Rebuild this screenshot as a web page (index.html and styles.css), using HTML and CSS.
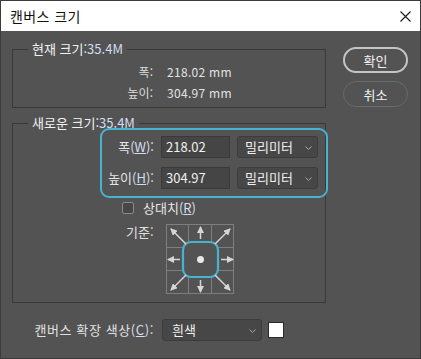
FILE: index.html
```html
<!DOCTYPE html>
<html lang="ko">
<head>
<meta charset="utf-8">
<title>캔버스 크기</title>
<link rel="stylesheet" href="styles.css">
</head>
<body>
<div class="window">
  <div class="titlebar">
    <span class="title">캔버스 크기</span>
    <svg class="close" width="11" height="11" viewBox="0 0 11 11"><path d="M0.5 0.5 L10.5 10.5 M10.5 0.5 L0.5 10.5" stroke="#1a1a1a" stroke-width="1.1" fill="none"/></svg>
  </div>
  <div class="content">
    <div class="main">
      <fieldset class="group current">
        <legend>현재 크기:<span class="lat">35.4M</span></legend>
        <div class="info">
          <span class="lbl">폭:</span><span class="val">218.02 mm</span>
          <span class="lbl">높이:</span><span class="val">304.97 mm</span>
        </div>
      </fieldset>
      <fieldset class="group new">
        <legend>새로운 크기:<span class="lat">35.4M</span></legend>
        <div class="dims">
          <span class="dlbl">폭<span class="lat">(<u>W</u>)</span>:</span>
          <div class="field">218.02</div>
          <div class="select"><span>밀리미터</span><svg class="chev" width="7" height="4" viewBox="0 0 7 4"><path d="M0.5 0.5 L3.5 3.5 L6.5 0.5" stroke="#a8a8a8" fill="none"/></svg></div>
          <span class="dlbl">높이<span class="lat">(<u>H</u>)</span>:</span>
          <div class="field">304.97</div>
          <div class="select"><span>밀리미터</span><svg class="chev" width="7" height="4" viewBox="0 0 7 4"><path d="M0.5 0.5 L3.5 3.5 L6.5 0.5" stroke="#a8a8a8" fill="none"/></svg></div>
        </div>
        <div class="rel"><span class="checkbox"></span><span>상대치<span class="lat">(<u>R</u>)</span></span></div>
        <div class="anchor">
          <span class="alabel">기준:</span>
          <svg class="grid" width="69" height="71" viewBox="0 0 69 71">
            <defs>
              <marker id="ah" markerWidth="7" markerHeight="7" refX="6" refY="3.5" orient="auto" markerUnits="userSpaceOnUse">
                <path d="M0 0 L7 3.5 L0 7 Z" fill="#d6d6d6"/>
              </marker>
            </defs>
            <g stroke="#7e7e7e" stroke-width="1" fill="none">
              <rect x="0.5" y="0.5" width="67" height="69"/>
              <path d="M22.5 0.5 V69.5 M45.5 0.5 V69.5 M0.5 23.5 H67.5 M0.5 46.5 H67.5"/>
            </g>
            <rect x="17" y="18" width="35" height="35" rx="8" fill="#535353" stroke="#46b4d0" stroke-width="2.2"/>
            <g stroke="#d6d6d6" stroke-width="1.5" fill="none" marker-end="url(#ah)">
              <path d="M34.5 15 V3"/>
              <path d="M34.5 56 V68"/>
              <path d="M14 35.5 H2"/>
              <path d="M55 35.5 H67"/>
              <path d="M20 20 L5 5"/>
              <path d="M49 20 L64 5"/>
              <path d="M20 51 L5 66"/>
              <path d="M49 51 L64 66"/>
            </g>
            <circle cx="34.5" cy="35.5" r="3.5" fill="#e8e8e8"/>
          </svg>
        </div>
      </fieldset>
      <div class="ext">
        <span class="elabel">캔버스 확장 색상<span class="lat">(<u>C</u>)</span>:</span>
        <div class="select wide"><span>흰색</span><svg class="chev" width="7" height="4" viewBox="0 0 7 4"><path d="M0.5 0.5 L3.5 3.5 L6.5 0.5" stroke="#a8a8a8" fill="none"/></svg></div>
        <span class="swatch"></span>
      </div>
    </div>
    <div class="buttons">
      <div class="btn primary">확인</div>
      <div class="btn secondary">취소</div>
    </div>
  </div>
</div>
</body>
</html>
```
FILE: styles.css
```css
* { box-sizing: border-box; }
html, body { margin: 0; padding: 0; background: #535353; }
body {
  font-family: "Noto Sans CJK KR", "Noto Sans", sans-serif;
  font-size: 13px;
  color: #e8e8e8;
}
.window {
  width: 421px;
  height: 359px;
  border: 1px solid #3c3c3c;
  background: #535353;
  display: flex;
  flex-direction: column;
}
.titlebar {
  height: 30px;
  flex: none;
  background: #ffffff;
  color: #111111;
  display: flex;
  align-items: center;
  justify-content: space-between;
  padding: 0 9px 0 9px;
  font-size: 14px;
  line-height: 18px;
}
.title { letter-spacing: 0.4px; }
.content {
  flex: 1;
  display: flex;
  gap: 17px;
  padding: 0 12px 0 11px;
}
.main {
  width: 314px;
  display: flex;
  flex-direction: column;
}
.group {
  margin: 0;
  padding: 0;
  border: 1px solid #393939;
  min-width: 0;
}
.group legend {
  margin-left: 15px;
  padding: 0 4px;
  font-size: 13px;
  line-height: 16px;
  color: #f2f2f2;
}
.lat { color: #d2ddee; }
.current { margin-top: 10px; padding: 4px 0 4px; }
.info {
  display: grid;
  grid-template-columns: 140px auto;
  column-gap: 14px;
  font-size: 12px;
  line-height: 21px;
}
.lbl { text-align: right; color: #dcdcdc; }
.val { color: #e2e2e2; letter-spacing: 0.3px; }
.new { margin-top: 7px; padding: 0 0 7px; }
.dims {
  margin: -3px 0 0 87px;
  width: 228px;
  border: 2px solid #46b4d0;
  border-radius: 9px;
  padding: 6px 0 7px;
  display: grid;
  grid-template-columns: 52px 69px 81px;
  grid-auto-rows: 22px;
  column-gap: 7px;
  row-gap: 9px;
}
.dlbl { text-align: right; line-height: 22px; color: #e4e4e4; }
.field {
  background: #454545;
  border: 1px solid #3a3a3a;
  padding-left: 4px;
  line-height: 20px;
  color: #f0f0f0;
}
.select {
  background: #474747;
  border: 1px solid #3c3c3c;
  border-radius: 3px;
  padding: 0 5px 0 7px;
  display: flex;
  align-items: center;
  justify-content: space-between;
  line-height: 20px;
  color: #f0f0f0;
}
.chev { flex: none; margin-top: 2px; }
.rel {
  display: flex;
  align-items: center;
  gap: 9px;
  margin: 1px 0 0 109px;
  line-height: 18px;
}
.checkbox {
  width: 12px;
  height: 12px;
  background: #474747;
  border: 1px solid #8a8a8a;
  border-radius: 2px;
}
.anchor {
  display: flex;
  align-items: flex-start;
  margin: 7px 0 0 113px;
}
.alabel { width: 40px; line-height: 16px; color: #e0e0e0; }
.grid { display: block; }
.ext {
  display: flex;
  align-items: center;
  margin-top: 16px;
  height: 22px;
}
.elabel {
  margin-left: 10px;
  width: 132px;
  text-align: right;
  color: #e0e0e0;
  line-height: 22px;
  white-space: nowrap;
  letter-spacing: 0.6px;
}
.wide {
  margin-left: 8px;
  width: 100px;
  height: 22px;
  padding-left: 9px;
}
.swatch {
  margin-left: 6px;
  width: 16px;
  height: 16px;
  background: #ffffff;
  border: 1px solid #2a2a2a;
}
.buttons {
  width: 65px;
  padding-top: 16px;
  display: flex;
  flex-direction: column;
  gap: 8px;
}
.btn {
  height: 26px;
  border-radius: 13px;
  display: flex;
  align-items: center;
  justify-content: center;
  font-size: 13px;
  color: #f2f2f2;
}
.primary { border: 2px solid #c4c4c4; }
.secondary { border: 1px solid #6a6a6a; }
```
